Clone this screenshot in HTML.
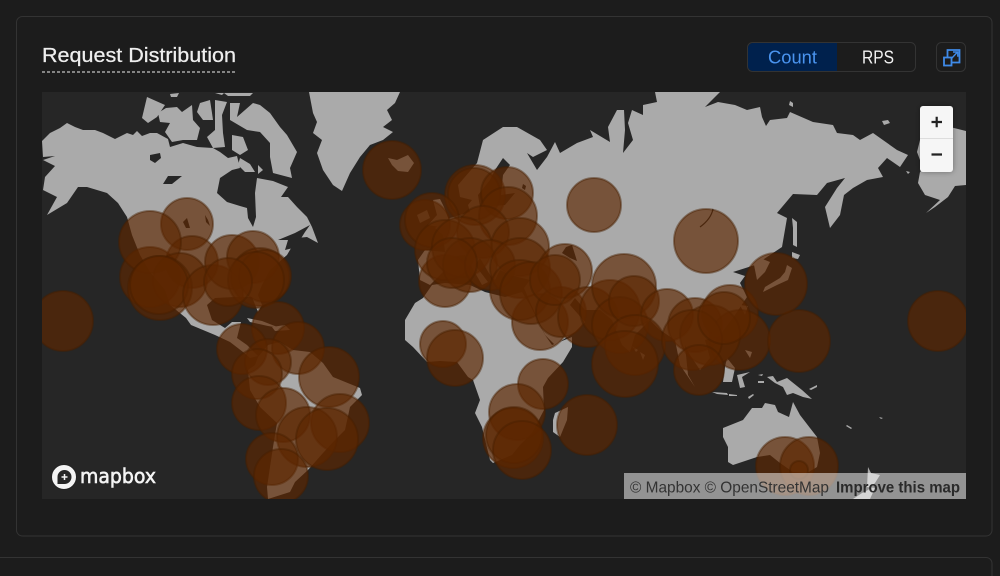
<!DOCTYPE html>
<html>
<head>
<meta charset="utf-8">
<style>
html,body{margin:0;padding:0;width:1000px;height:576px;background:#1c1c1c;overflow:hidden}
svg{display:block}
text{font-family:"Liberation Sans",sans-serif}
.l{fill:#aaaaaa}
.w{fill:#262626}
.c circle{fill:rgba(92,38,0,.66);stroke:rgba(70,30,0,.45);stroke-width:2}
</style>
</head>
<body>
<svg width="1000" height="576" viewBox="0 0 1000 576" xmlns="http://www.w3.org/2000/svg">
<defs>
<clipPath id="m"><rect x="42" y="92" width="924" height="407"/></clipPath>
<filter id="s" x="-30%" y="-30%" width="160%" height="160%"><feDropShadow dx="0" dy="0" stdDeviation="3" flood-color="#000" flood-opacity=".35"/></filter>
</defs>
<rect width="1000" height="576" fill="#1c1c1c"/>
<rect x="16.5" y="16.5" width="975.5" height="519.5" rx="6" fill="#1c1c1c" stroke="#333" stroke-width="1"/>
<path d="M-2 557.5H986a6 6 0 0 1 6 6V580" fill="none" stroke="#333"/>

<text x="42" y="62" font-size="20" fill="#eeeeee" stroke="#eeeeee" stroke-width=".25" textLength="194" lengthAdjust="spacingAndGlyphs">Request Distribution</text>
<line x1="42" y1="72" x2="236" y2="72" stroke="#eee" stroke-width="1" stroke-dasharray="3 2"/>

<rect x="747.5" y="42.5" width="168" height="29" rx="5" fill="#1c1c1c" stroke="#333"/>
<path d="M837 43H753a5 5 0 0 0-5 5V66a5 5 0 0 0 5 5H837Z" fill="#00214d"/>
<text x="768" y="63.5" font-size="18.5" fill="#4a94ef" textLength="49" lengthAdjust="spacingAndGlyphs">Count</text>
<text x="862" y="63.5" font-size="18" fill="#f2f2f2" textLength="32" lengthAdjust="spacingAndGlyphs">RPS</text>

<rect x="936.5" y="42.5" width="29" height="29" rx="5" fill="#1c1c1c" stroke="#333"/>
<g fill="none" stroke="#3f8ae8" stroke-width="1.8">
<path d="M947.5 57V50H959.5V62.5H951.5"/>
<rect x="944" y="57.5" width="7.5" height="8"/>
<path d="M951.5 58.5L957.5 52M953 52H957.8V56.8" stroke-width="1.4"/>
</g>

<g clip-path="url(#m)">
<rect x="42" y="92" width="924" height="407" fill="#262626"/>
<g class="l">
<!-- North America -->
<polygon points="42,141 50,133 60,128 67,123 75,127 83,130 95,130 103,133 115,139 127,133 133,135 137,131 142,136 150,133 157,133 168,139 170,147 183,143 197,147 213,148 220,152 228,158 237,156 240,168 232,170 220,178 217,193 227,202 240,206 247,208 248,218 253,227 256,217 255,193 257,178 273,181 288,187 281,197 288,197 297,207 307,217 312,227 318,243 307,237 297,238 287,255 270,270 262,285 258,295 262,305 258,312 252,297 235,297 215,298 207,305 212,320 225,328 232,322 241,322 237,338 247,345 258,356 250,358 243,352 230,342 215,335 191,325 186,318 170,305 165,290 150,272 140,255 132,235 127,217 118,203 107,193 87,187 78,187 67,203 47,215 57,197 43,190 45,177 55,166 43,160 55,156 43,157"/>
<!-- Arctic islands -->
<polygon points="147,97 165,105 157,117 148,123 142,118"/>
<polygon points="158,113 166,108 177,107 182,112 192,105 193,120 200,128 197,140 183,140 172,142 165,132 170,123 160,122"/>
<polygon points="200,103 210,100 212,113 213,120 203,120 197,112"/>
<polygon points="215,100 227,102 222,115 223,133 225,147 213,148 207,137 215,130 215,117"/>
<polygon points="230,103 240,103 237,117 253,103 260,105 270,113 280,127 287,135 297,152 290,168 292,178 273,173 270,157 270,143 260,132 247,130 230,120"/>
<polygon points="232,135 243,137 248,150 240,155 232,150"/>
<polygon points="170,94 179,93 177,97 171,97"/>
<polygon points="215,93 224,93 222,95"/>
<polygon points="224,93 253,93 250,96 228,96"/>
<polygon points="240,158 250,164 255,172 245,172 238,165"/>
<polygon points="258,165 263,170 258,174"/>
<!-- Greenland -->
<polygon points="309,92 400,92 395,103 387,110 392,120 383,127 393,132 383,140 370,145 360,157 350,173 342,191 333,185 323,170 317,153 322,140 313,133 317,122 313,113"/>
<!-- Iceland -->
<polygon points="388,158 397,160 408,155 414,163 408,172 398,171 392,165"/>
<!-- UK -->
<polygon points="428,225 437,215 433,200 440,199 444,207 449,220 445,228"/>
<polygon points="417,215 427,210 430,218 420,223"/>
<!-- Eurasia -->
<polygon points="477,163 483,140 503,127 517,127 540,140 547,150 533,157 527,153 537,170 547,157 555,142 560,153 577,143 593,137 590,130 610,142 608,127 617,110 624,110 625,130 623,153 633,140 628,123 632,110 643,115 643,105 657,102 655,92 720,92 705,107 718,102 735,105 747,110 760,107 762,117 766,126 770,120 787,118 790,112 813,122 833,125 837,133 853,135 860,140 873,133 897,150 908,155 900,167 887,158 878,168 883,177 867,180 853,188 844,195 840,215 830,228 825,207 837,188 845,178 827,183 817,195 793,194 777,213 787,218 782,247 773,253 755,265 733,272 745,276 740,283 747,297 735,315 720,335 705,340 710,358 700,370 690,355 685,345 688,375 695,387 680,365 675,340 660,330 650,320 635,335 630,352 622,345 612,320 600,310 585,310 575,298 570,305 585,322 575,332 555,345 545,335 530,302 524,288 530,280 510,275 500,270 495,280 490,275 480,258 475,265 488,282 482,285 465,255 450,257 445,270 430,285 420,280 418,260 425,250 445,252 443,235 435,228 450,218 470,212 468,205 472,200 460,197 458,185"/>
<!-- Sakhalin, Hokkaido, Japan -->
<polygon points="792,218 797,222 797,247 793,245 793,228"/>
<polygon points="792,252 800,255 798,259 792,258"/>
<polygon points="787,265 792,268 788,280 777,285 763,292 765,287 780,278 785,272"/>
<polygon points="754,265 760,258 770,262 765,272 757,280"/>
<!-- Wrapped Alaska -->
<polygon points="966,185 955,186 948,197 935,207 926,213 940,200 925,195 918,183 920,172 925,168 920,160 917,152 920,140 930,130 950,127 966,131"/>
<polygon points="882,121 888,120 890,123 884,125"/>
<polygon points="906,171 910,172 908,174"/>
<polygon points="790,101 793,103 793,107 789,105"/>
<!-- Africa -->
<polygon points="423,298 432,285 445,283 470,285 485,292 505,297 522,292 530,305 545,335 552,345 572,337 572,347 563,362 548,378 543,387 544,410 532,433 520,445 512,455 493,463 490,460 482,427 475,413 480,400 473,380 468,377 457,362 440,361 427,362 413,347 405,340 405,320 415,303"/>
<!-- Madagascar -->
<polygon points="555,413 568,407 567,420 560,437 553,432 553,420"/>
<!-- South America -->
<polygon points="258,357 268,345 280,342 293,350 310,352 323,363 333,377 360,388 362,395 350,407 345,430 335,440 323,453 308,470 295,482 290,492 268,499 267,487 273,447 277,423 260,407 250,390 248,370 255,365"/>
<!-- Caribbean -->
<polygon points="247,318 262,321 280,328 268,326 250,322"/>
<polygon points="272,327 285,325 290,330 275,331"/>
<!-- SE Asia -->
<polygon points="727,358 735,368 732,382 723,382 725,367"/>
<polygon points="737,375 750,372 742,377 745,387 740,388"/>
<polygon points="767,377 773,376 777,382 787,378 802,390 812,399 803,397 793,393 787,395 783,387 775,383"/>
<polygon points="712,392 727,393 728,395 717,394"/>
<polygon points="729,394 737,395 737,396 729,396"/>
<polygon points="748,397 753,394 754,395 749,399"/>
<polygon points="758,375 763,374 762,376"/>
<polygon points="758,381 764,381 764,383 758,383"/>
<polygon points="809,389 817,385 817,387 811,390"/>
<polygon points="740,305 748,306 745,315"/>
<polygon points="745,350 752,352 750,358"/>
<polygon points="632,346 638,350 636,352"/>
<polygon points="640,352 645,355 643,360"/>
<!-- Australia -->
<polygon points="723,428 743,420 752,408 762,408 765,403 775,405 778,412 789,417 793,402 800,415 810,428 817,437 820,453 817,467 807,473 793,472 780,463 770,455 757,457 733,465 728,462 728,447 723,437"/>
<!-- Pacific islands / NZ -->
<polygon points="847,425 852,428 851,429 846,426"/>
<polygon points="868,467 871,473 880,475 875,483 868,490 862,493 853,499 860,499 870,499 875,488 867,487"/>
<polygon points="879,417 883,418 881,419"/>
</g>
<g class="w">
<polygon points="503,158 510,165 503,175 501,195 515,193 505,205 480,207 478,195 490,180 495,170"/>
<polygon points="278,240 295,233 310,225 305,232 300,240 293,248 285,250 288,240"/>
<polygon points="150,155 160,153 161,158 155,163 150,160"/>
<polygon points="163,184 168,176 182,176 172,184"/>
<polygon points="205,215 208,220 210,226 206,222"/>
<polygon points="523,184 526,186 525,190 522,188"/>
<polygon points="566,247 572,245 577,261 570,258 562,253"/>
<polygon points="183,222 187,218 190,228 186,228"/>
</g>
<path d="M713 209Q711 219 700 227" fill="none" stroke="#262626" stroke-width="1.2"/>
<g class="c">
<circle cx="150" cy="277" r="30"/><circle cx="187" cy="224" r="26"/><circle cx="192" cy="262" r="26"/><circle cx="150" cy="242" r="31"/><circle cx="180" cy="280" r="27"/><circle cx="160" cy="288" r="32"/><circle cx="159" cy="285" r="29"/><circle cx="213" cy="295" r="30"/><circle cx="232" cy="262" r="27"/><circle cx="253" cy="257" r="26"/><circle cx="260" cy="277" r="29"/><circle cx="265" cy="276" r="26"/><circle cx="256" cy="280" r="28"/><circle cx="228" cy="282" r="24"/><circle cx="63" cy="321" r="30"/>
<circle cx="278" cy="328" r="26"/><circle cx="298" cy="348" r="26"/><circle cx="242" cy="349" r="25"/><circle cx="268" cy="362" r="23"/><circle cx="257" cy="374" r="25"/><circle cx="329" cy="377" r="30"/><circle cx="259" cy="403" r="27"/><circle cx="283" cy="415" r="27"/><circle cx="340" cy="423" r="29"/><circle cx="307" cy="437" r="30"/><circle cx="327" cy="439" r="31"/><circle cx="272" cy="459" r="26"/><circle cx="281" cy="476" r="27"/>
<circle cx="392" cy="170" r="29"/><circle cx="475" cy="195" r="30"/><circle cx="474" cy="194" r="26"/><circle cx="507" cy="193" r="26"/><circle cx="425" cy="225" r="25"/><circle cx="432" cy="220" r="27"/><circle cx="508" cy="216" r="29"/><circle cx="483" cy="232" r="26"/><circle cx="520" cy="247" r="29"/><circle cx="445" cy="281" r="26"/><circle cx="445" cy="250" r="30"/><circle cx="462" cy="247" r="30"/><circle cx="470" cy="265" r="27"/><circle cx="490" cy="265" r="25"/><circle cx="520" cy="268" r="30"/><circle cx="452" cy="263" r="25"/>
<circle cx="540" cy="322" r="28"/><circle cx="520" cy="290" r="30"/><circle cx="531" cy="293" r="31"/><circle cx="561" cy="312" r="25"/><circle cx="565" cy="271" r="27"/><circle cx="555" cy="280" r="25"/><circle cx="588" cy="317" r="30"/><circle cx="610" cy="310" r="30"/><circle cx="624" cy="286" r="32"/><circle cx="620" cy="325" r="28"/><circle cx="634" cy="301" r="25"/><circle cx="667" cy="315" r="26"/><circle cx="635" cy="345" r="30"/><circle cx="625" cy="364" r="33"/><circle cx="594" cy="205" r="27"/><circle cx="706" cy="241" r="32"/>
<circle cx="695" cy="325" r="27"/><circle cx="730" cy="313" r="28"/><circle cx="740" cy="340" r="30"/><circle cx="710" cy="335" r="30"/><circle cx="692" cy="340" r="30"/><circle cx="724" cy="318" r="26"/><circle cx="699" cy="370" r="25"/><circle cx="799" cy="341" r="31"/><circle cx="776" cy="284" r="31"/><circle cx="938" cy="321" r="30"/>
<circle cx="443" cy="344" r="23"/><circle cx="455" cy="358" r="28"/><circle cx="543" cy="384" r="25"/><circle cx="517" cy="412" r="28"/><circle cx="513" cy="438" r="30"/><circle cx="514" cy="435" r="28"/><circle cx="522" cy="450" r="29"/><circle cx="587" cy="425" r="30"/>
<circle cx="785" cy="466" r="29"/><circle cx="809" cy="466" r="29"/><circle cx="799" cy="470" r="9"/>
</g>
</g>

<!-- Attribution -->
<rect x="624" y="473" width="342" height="26" fill="rgba(255,255,255,.5)"/>
<text x="630" y="492.5" font-size="16" fill="#333" textLength="199" lengthAdjust="spacingAndGlyphs">© Mapbox © OpenStreetMap</text>
<text x="836" y="492.5" font-size="15.5" font-weight="700" fill="#2a2a2a" textLength="124" lengthAdjust="spacingAndGlyphs">Improve this map</text>

<!-- Zoom control -->
<rect x="920" y="106" width="33" height="66" rx="3" fill="#f6f6f6" filter="url(#s)"/>
<line x1="920" y1="138.5" x2="953" y2="138.5" stroke="#ddd"/>
<path d="M931.5 122H942M936.7 116.7V127.3M931.5 154.5H942" stroke="#222" stroke-width="2.2" fill="none"/>

<!-- Mapbox logo -->
<circle cx="64" cy="477" r="12.5" fill="#f4f4f4" stroke="#222" stroke-width="1"/>
<path d="M57.5 484V477a7 7 0 1 1 7 7Z" fill="#262626"/>
<path d="M64.5 474V480M61.5 477H67.5" stroke="#f4f4f4" stroke-width="1.5"/>
<text x="80" y="483" font-size="20" fill="#f4f4f4" stroke="#f4f4f4" stroke-width=".6" textLength="76" lengthAdjust="spacingAndGlyphs" style="font-family:'DejaVu Sans',sans-serif">mapbox</text>
</svg>
</body>
</html>
